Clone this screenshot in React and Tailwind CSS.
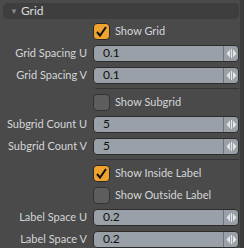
import React from "react";

const font = { fontFamily: 'Lato, "Liberation Sans", sans-serif' };

function Check({ checked }) {
  return checked ? (
    <div className="w-[17px] h-[17px] rounded-[4px] bg-[#f0a22e] border border-[#2a2a2a] flex items-center justify-center">
      <svg width="13" height="13" viewBox="0 0 13 13">
        <path d="M2 7 L5 10.5 L11 2" fill="none" stroke="#111" strokeWidth="2" />
      </svg>
    </div>
  ) : (
    <div className="w-[17px] h-[17px] rounded-[4px] bg-[#5d5d5d] border border-[#333]" />
  );
}

function CheckRow({ label, checked }) {
  return (
    <div className="flex items-center h-[22px] pl-[93px]">
      <Check checked={checked} />
      <span className="ml-[5px] text-[11px] text-[#d4d6d8]">{label}</span>
    </div>
  );
}

function FieldRow({ label, value }) {
  return (
    <div className="flex items-center h-[22px]">
      <span className="w-[89px] pr-[2px] text-right text-[11px] text-[#d4d6d8] whitespace-nowrap">
        {label}
      </span>
      <div className="flex-1 h-[17px] mr-[1px] ml-[4px] rounded-[4px] border border-[#2c2c2c] bg-[#9aa0a7] flex items-center">
        <span className="flex-1 pl-[9px] text-[12px] text-[#111]">{value}</span>
        <div className="w-[15px] h-full border-l border-[#6f747a] flex items-center justify-center">
          <svg width="11" height="9" viewBox="0 0 11 9">
            <path d="M4 0.5 L0.5 4.5 L4 8.5 Z" fill="#e4e6e8" />
            <rect x="5" y="0" width="1" height="9" fill="#e4e6e8" />
            <path d="M7 0.5 L10.5 4.5 L7 8.5 Z" fill="#e4e6e8" />
          </svg>
        </div>
      </div>
    </div>
  );
}

function Sep() {
  return (
    <div className="h-[5px] flex items-center pl-[96px] pr-[1px]">
      <div className="w-full h-px bg-[#353535]" />
    </div>
  );
}

export default function App() {
  return (
    <div className="w-[244px] h-[248px] bg-[#3b3b3b] flex" style={font}>
      <div className="w-[240px] h-full bg-[#4a4a4a] pt-[3px]">
        <div className="ml-[3px] mr-[1px] h-[16px] rounded-[5px] bg-[#3e3e3e] flex items-center pl-[7px]">
          <span className="text-[8px] text-[#8a8a8a]">▼</span>
          <span className="ml-[3px] text-[12px] text-[#dcdcdc]">Grid</span>
        </div>
        <div className="pt-[1px]">
          <CheckRow label="Show Grid" checked />
          <FieldRow label="Grid Spacing U" value="0.1" />
          <FieldRow label="Grid Spacing V" value="0.1" />
          <Sep />
          <CheckRow label="Show Subgrid" />
          <FieldRow label="Subgrid Count U" value="5" />
          <FieldRow label="Subgrid Count V" value="5" />
          <Sep />
          <CheckRow label="Show Inside Label" checked />
          <CheckRow label="Show Outside Label" />
          <FieldRow label="Label Space U" value="0.2" />
          <FieldRow label="Label Space V" value="0.2" />
        </div>
      </div>
    </div>
  );
}
